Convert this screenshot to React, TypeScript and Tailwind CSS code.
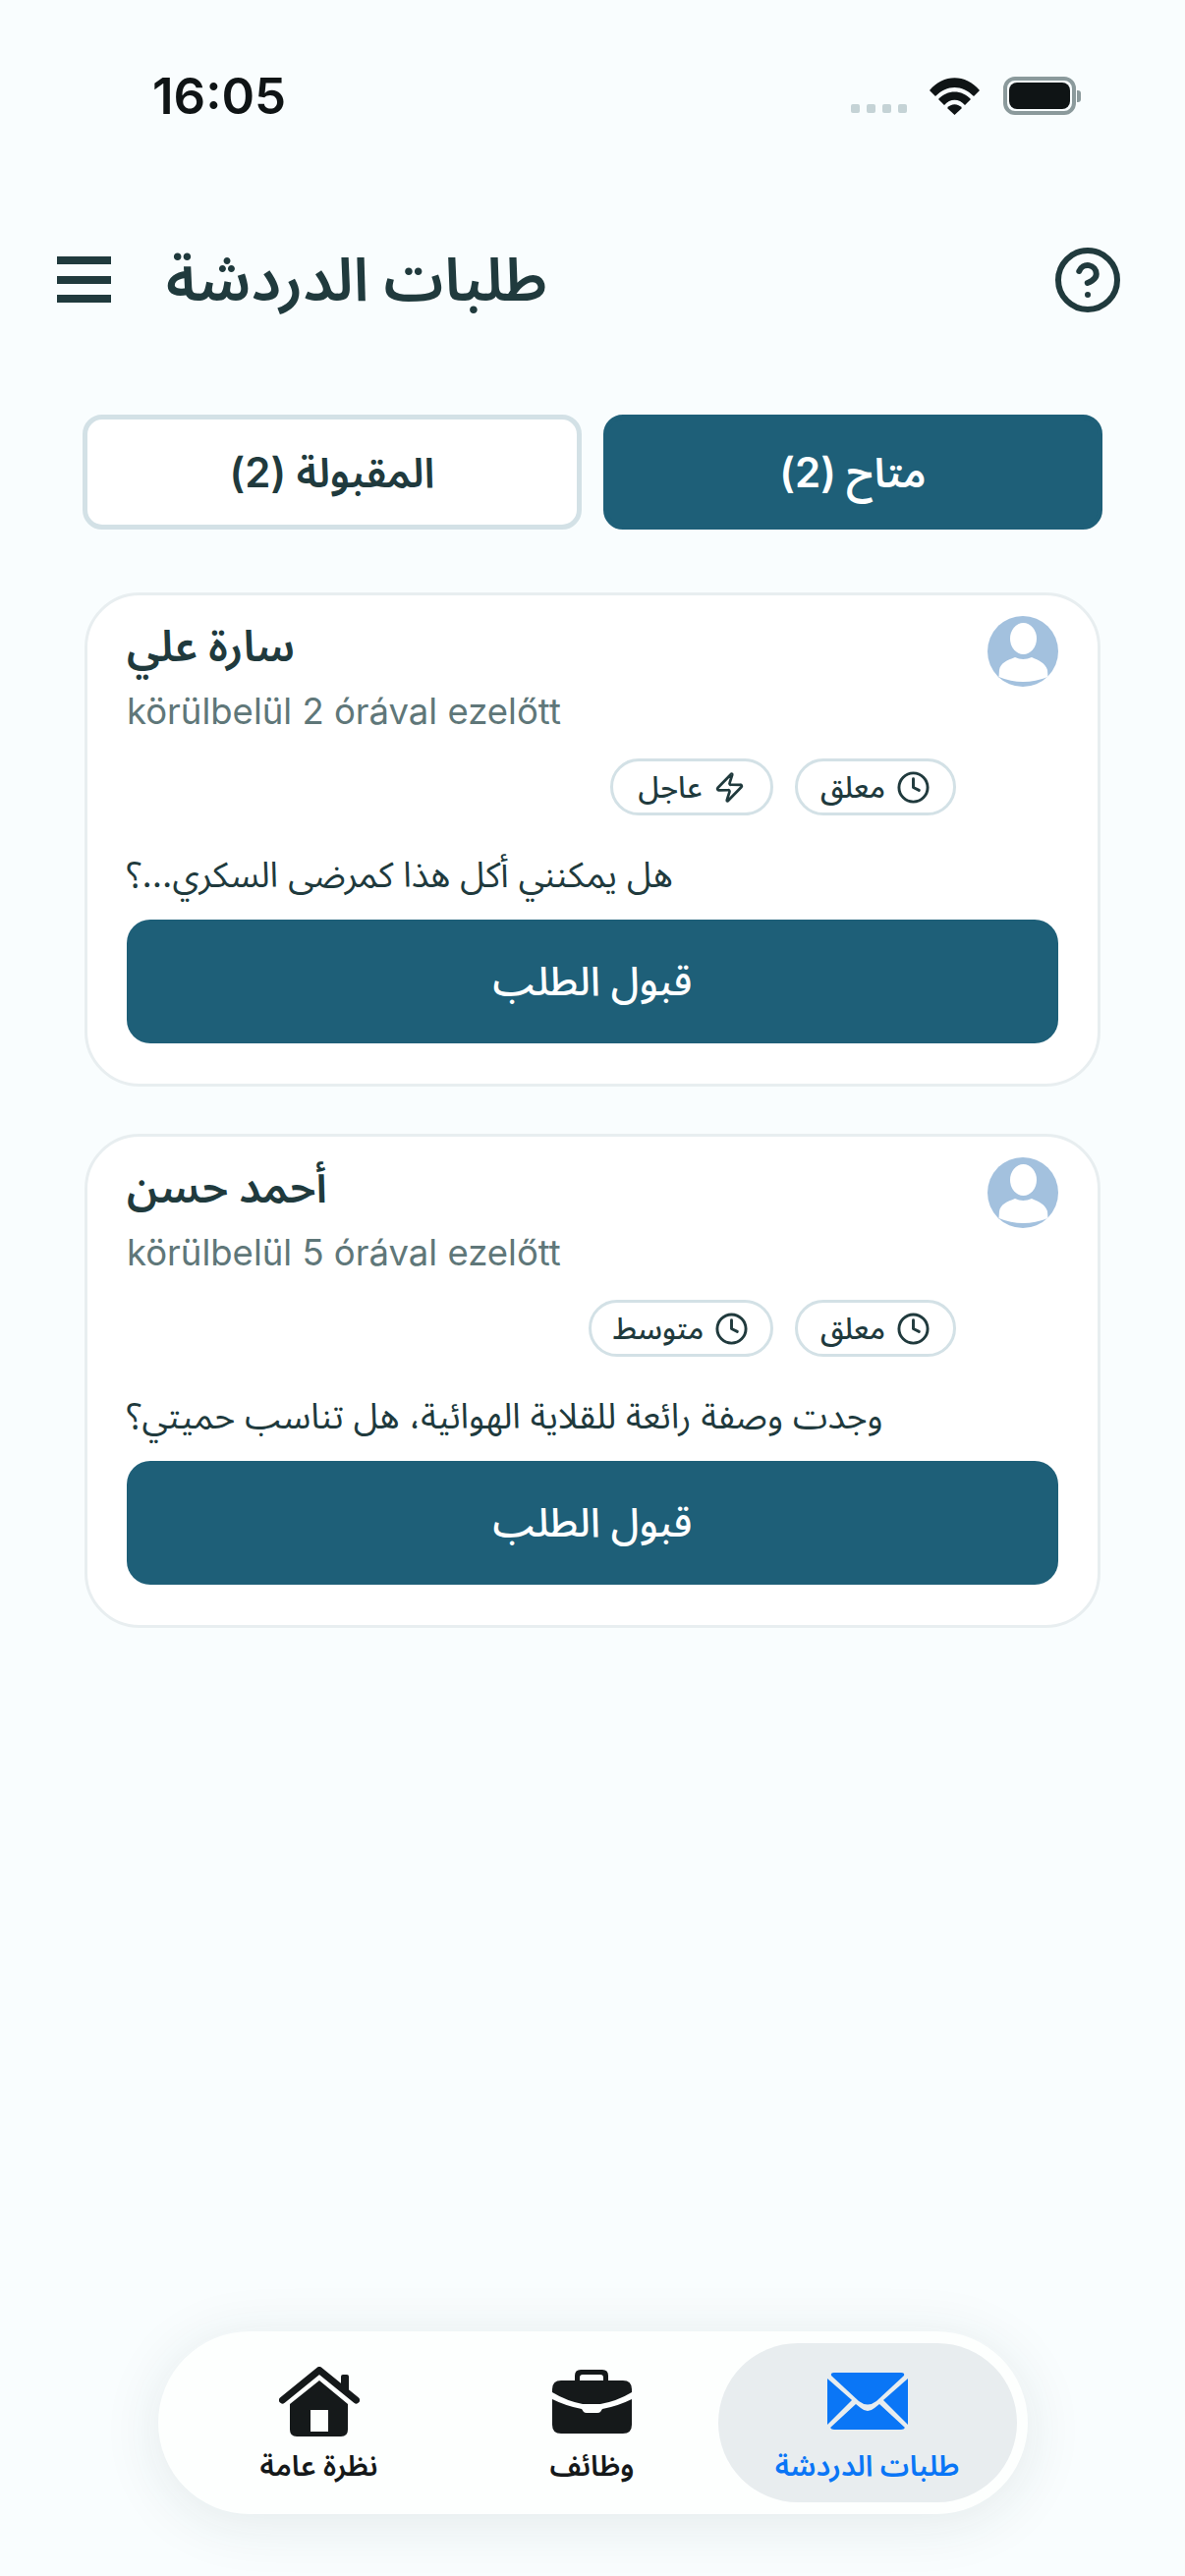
import React from 'react';
import { Clock, Zap, CircleHelp } from 'lucide-react';

const arabicFont = 'font-["Inter","Noto_Sans_Arabic","Noto_Sans","DejaVu_Sans",sans-serif]';

const StatusBar: React.FC = () => (
    <div className="flex items-start justify-between h-[252px] pl-[155px] pr-[106px] pt-[68px]">
        <span className="text-[51px] leading-[60px] font-semibold text-[#0f1415]">16:05</span>
        <div className="flex items-end mt-[10px]">
            <div className="flex gap-[7px] mb-[2px] mr-[23px]">
                <span className="w-[9px] h-[9px] rounded-[2px] bg-[#c5d3d6]" />
                <span className="w-[9px] h-[9px] rounded-[2px] bg-[#c5d3d6]" />
                <span className="w-[9px] h-[9px] rounded-[2px] bg-[#c5d3d6]" />
                <span className="w-[9px] h-[9px] rounded-[2px] bg-[#c5d3d6]" />
            </div>
            <svg width="51" height="38" viewBox="0 0 51 38" className="mr-[24px]">
                <path d="M0 13 C14 -4 37 -4 51 13 L45 19 C33 7 18 7 6 19 Z" fill="#0f1415" />
                <path d="M9 22 C18 12 33 12 42 22 L36 28 C30 21 21 21 15 28 Z" fill="#0f1415" />
                <path d="M18 31 C22 26 29 26 33 31 L25.5 38 Z" fill="#0f1415" />
            </svg>
            <div className="flex items-center">
                <div className="w-[74px] h-[39px] rounded-[12px] border-[4px] border-[#8b9a9c] p-[2px]">
                    <div className="w-full h-full rounded-[8px] bg-[#0f1415]" />
                </div>
                <span className="w-[4px] h-[12px] ml-[1px] rounded-r-[3px] bg-[#8b9a9c]" />
            </div>
        </div>
    </div>
);

const Header: React.FC = () => (
    <div className="flex items-center justify-between h-[65px] pl-[58px] pr-[63px]">
        <div className="flex items-center">
            <div className="flex flex-col justify-between w-[55px] h-[47px]">
                <span className="h-[8px] bg-[#203a3d]" />
                <span className="h-[8px] bg-[#203a3d]" />
                <span className="h-[8px] bg-[#203a3d]" />
            </div>
            <h1 dir="rtl" className="ml-[56px] mb-[2px] text-[61px] leading-[70px] font-semibold text-[#203a3d]">طلبات الدردشة</h1>
        </div>
        <CircleHelp size={72} strokeWidth={2} className="text-[#203a3d]" />
    </div>
);

const Tabs: React.FC = () => (
    <div className="flex gap-[22px] mt-[105px] pl-[84px] pr-[84px]">
        <button className="flex-1 h-[117px] rounded-[20px] bg-white border-[5px] border-[#d3e1e6] text-[42px] font-semibold text-[#203a3d]">
            <span dir="rtl">المقبولة (2)</span>
        </button>
        <button className="flex-1 h-[117px] rounded-[20px] bg-[#1e5f78] border-[5px] border-[#1e5f78] text-[42px] font-semibold text-white">
            <span dir="rtl">متاح (2)</span>
        </button>
    </div>
);

const Avatar: React.FC = () => (
    <svg width="72" height="72" viewBox="0 0 72 72" className="shrink-0">
        <circle cx="36" cy="36" r="36" fill="#a3c1de" />
        <ellipse cx="36.5" cy="23" rx="13.5" ry="16" fill="#fff" />
        <path d="M11.5 62 L12 55 C13 48 20 45 28 42 Q36 46 45 42 C52 45 59 48 61 55 L61.5 62 Q36 72 11.5 62 Z" fill="#fff" />
    </svg>
);

interface PillProps {
    icon: React.ReactNode;
    label: string;
    width: string;
}

const Pill: React.FC<PillProps> = ({ icon, label, width }) => (
    <div className={`flex items-center justify-center gap-[11px] h-[58px] rounded-full border-[3px] border-[#d3e1e6] text-[30px] font-medium text-[#203a3d] ${width}`}>
        {icon}
        <span>{label}</span>
    </div>
);

interface RequestCardProps {
    name: string;
    time: string;
    secondIcon: React.ReactNode;
    secondLabel: string;
    secondWidth: string;
    question: string;
}

const RequestCard: React.FC<RequestCardProps> = ({ name, time, secondIcon, secondLabel, secondWidth, question }) => (
    <div className="h-[503px] rounded-[56px] bg-white border-[3px] border-[#e8eef0] pl-[40px] pr-[40px] pt-[21px]">
        <div className="flex justify-between">
            <div>
                <p className="text-[44px] leading-[60px] font-semibold text-[#203a3d]">{name}</p>
                <p className="text-[36.5px] leading-[44px] mt-[15px] text-[#5f7779]">{time}</p>
            </div>
            <Avatar />
        </div>
        <div dir="rtl" className="flex gap-[22px] mt-[26px] pr-[104px]">
            <Pill icon={<Clock size={35} strokeWidth={2} />} label="معلق" width="w-[164px]" />
            <Pill icon={secondIcon} label={secondLabel} width={secondWidth} />
        </div>
        <p className="mt-[30px] text-[35.75px] leading-[60px] text-[#203a3d]">{question}</p>
        <button className="w-full h-[126px] mt-[16px] rounded-[24px] bg-[#1e5f78] text-[41px] font-medium text-white">قبول الطلب</button>
    </div>
);

const HomeIcon: React.FC = () => (
    <svg width="82" height="72" viewBox="0 0 82 72">
        <path d="M41 14 L70 38 V64 Q70 71 63 71 H18 Q11 71 11 64 V38 Z M32 44 V66 H50 V44 Z" fillRule="evenodd" fill="#15191a" />
        <path d="M3.5 34 L41 3.5 L78.5 34" fill="none" stroke="#15191a" strokeWidth="7" strokeLinecap="round" strokeLinejoin="round" />
        <rect x="63" y="8" width="8" height="18" rx="2" fill="#15191a" />
    </svg>
);

const BriefcaseIcon: React.FC = () => (
    <svg width="81" height="66" viewBox="0 0 81 66">
        <path d="M23 12 V7 Q23 1 29 1 H51 Q57 1 57 7 V12 H52 V9 Q52 6 49 6 H31 Q28 6 28 9 V12 Z" fill="#15191a" />
        <path d="M0 21 Q0 12 9 12 H72 Q81 12 81 21 V24 Q66 33 49 36 H31 Q15 33 0 24 Z" fill="#15191a" />
        <path d="M0 31 Q14 38 30 41 L32 44 Q33 45 35 45 H46 Q48 45 49 44 L51 41 Q67 38 81 31 V57 Q81 66 72 66 H9 Q0 66 0 57 Z" fill="#15191a" />
    </svg>
);

const MailIcon: React.FC = () => (
    <svg width="82" height="58" viewBox="0 0 82 58">
        <path d="M7 0 H75 Q79 0 78 3 L50 29 Q41 36 32 29 L4 3 Q3 0 7 0 Z" fill="#0a76f6" />
        <path d="M0 6 L25 28 L0 53 Z" fill="#0a76f6" />
        <path d="M82 6 L57 28 L82 53 Z" fill="#0a76f6" />
        <path d="M3 56 L29 32 L34 36 Q41 42 48 36 L53 32 L79 56 Q78 58 75 58 H7 Q4 58 3 56 Z" fill="#0a76f6" />
    </svg>
);

const BottomNav: React.FC = () => (
    <div className="flex items-stretch self-center w-[885px] h-[186px] mt-auto mb-[63px] py-[12px] pl-[25px] pr-[11px] rounded-full bg-[#fdfffe] shadow-[0_8px_60px_rgba(32,58,61,0.10)]">
        <div className="flex w-[278px] flex-col items-center gap-[8px] pt-[24px] text-[29.5px] leading-[40px] font-semibold text-[#15191a]">
            <HomeIcon />
            <span>نظرة عامة</span>
        </div>
        <div className="flex w-[278px] flex-col items-center gap-[12px] pt-[26px] text-[29.5px] leading-[40px] font-semibold text-[#15191a]">
            <BriefcaseIcon />
            <span>وظائف</span>
        </div>
        <div className="flex w-[304px] -ml-[11px] flex-col items-center gap-[16px] pt-[30px] rounded-full bg-[#e8edef] text-[29.5px] leading-[40px] font-semibold text-[#0a76f6]">
            <MailIcon />
            <span>طلبات الدردشة</span>
        </div>
    </div>
);

const App: React.FC = () => (
    <div className={`flex flex-col h-screen bg-[#f9fdfe] ${arabicFont}`}>
        <StatusBar />
        <Header />
        <Tabs />
        <div className="flex flex-col gap-[48px] mt-[64px] pl-[86px] pr-[86px]">
            <RequestCard
                name="سارة علي"
                time="körülbelül 2 órával ezelőtt"
                secondIcon={<Zap size={33} strokeWidth={2} />}
                secondLabel="عاجل"
                secondWidth="w-[166px]"
                question="هل يمكنني أكل هذا كمرضى السكري...؟"
            />
            <RequestCard
                name="أحمد حسن"
                time="körülbelül 5 órával ezelőtt"
                secondIcon={<Clock size={35} strokeWidth={2} />}
                secondLabel="متوسط"
                secondWidth="w-[188px]"
                question="وجدت وصفة رائعة للقلاية الهوائية، هل تناسب حميتي؟"
            />
        </div>
        <BottomNav />
    </div>
);

export default App;
